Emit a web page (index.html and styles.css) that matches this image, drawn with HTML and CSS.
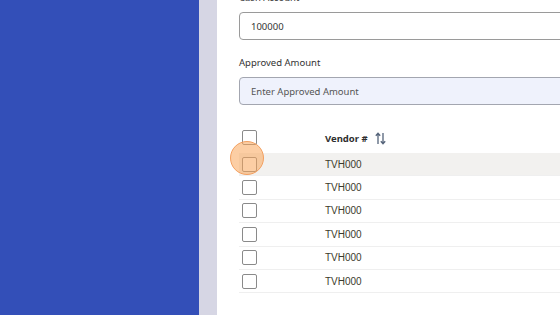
FILE: index.html
```html
<!DOCTYPE html>
<html lang="en">
<head>
    <meta charset="UTF-8">
    <title>Vendor Payments</title>
    <link rel="stylesheet" href="styles.css">
</head>
<body>
    <div class="layout">
        <aside class="sidebar"></aside>
        <div class="gutter"></div>
        <main class="main">
            <label class="field-label first">Cash Account</label>
            <input type="text" class="field-input" value="100000">

            <label class="field-label">Approved Amount</label>
            <input type="text" class="field-input filled" placeholder="Enter Approved Amount">

            <div class="vendor-table">
                <div class="table-head">
                    <div class="col-check"><span class="checkbox"></span></div>
                    <div class="col-vendor">Vendor #
                        <svg class="sort-icon" width="11" height="13" viewBox="0 0 11 13">
                            <path d="M3 12V1.5M0.8 3.8L3 1.3L5.2 3.8" fill="none" stroke="#55647a" stroke-width="1.3"/>
                            <path d="M8 1V11.5M5.8 9.2L8 11.7L10.2 9.2" fill="none" stroke="#55647a" stroke-width="1.3"/>
                        </svg>
                    </div>
                </div>
                <div id="vendorRows"></div>
            </div>
        </main>
    </div>

    <script>
        const rows = document.getElementById('vendorRows');
        for (let i = 0; i < 6; i++) {
            const row = document.createElement('div');
            row.className = i === 0 ? 'table-row active' : 'table-row';
            row.innerHTML = '<div class="col-check"><span class="checkbox"></span>' +
                (i === 0 ? '<span class="click-dot"></span>' : '') +
                '</div><div class="col-vendor">TVH000</div>';
            rows.appendChild(row);
        }
    </script>
</body>
</html>
```

FILE: styles.css
```css
body {
    margin: 0;
    font-family: "Noto Sans", Arial, sans-serif;
    overflow: hidden;
}
.layout {
    display: flex;
    height: 315px;
    overflow: hidden;
}
.sidebar {
    flex: 0 0 199px;
    background-color: #334fb8;
}
.gutter {
    flex: 0 0 18px;
    background-color: #d6d6e4;
}
.main {
    flex: 1;
    min-width: 0;
    padding-left: 22px;
    background-color: #fff;
}
.field-label {
    display: block;
    font-size: 9.5px;
    line-height: 14px;
    color: #333;
    margin: 16px 0 7px;
}
.field-label.first {
    margin-top: -9px;
}
.field-input {
    display: block;
    box-sizing: border-box;
    width: 380px;
    height: 28px;
    padding: 0 11px;
    border: 1px solid #9a9a9a;
    border-radius: 4px;
    font-family: "Noto Sans", Arial, sans-serif;
    font-size: 9.5px;
    color: #333;
}
.field-input.filled {
    background-color: #eff2fc;
    border-color: #a3a6b0;
}
.field-input::placeholder {
    color: #555;
}
.vendor-table {
    width: 380px;
    margin-top: 19px;
    font-family: "Liberation Sans", Arial, sans-serif;
    font-size: 10px;
}
.table-head,
.table-row {
    display: flex;
    align-items: center;
}
.table-head {
    height: 29px;
    font-family: "Noto Sans", Arial, sans-serif;
    font-size: 9.5px;
    font-weight: bold;
    color: #2f2f2f;
}
.table-head .col-check {
    margin-top: -2px;
}
.table-head .col-vendor {
    display: flex;
    align-items: center;
    gap: 7px;
}
.table-row {
    box-sizing: border-box;
    height: 23.4px;
    color: #3b3b2c;
    border-bottom: 1px solid #efefef;
}
.table-row.active {
    background-color: #f2f1ef;
}
.col-check {
    flex: 0 0 83px;
    padding-left: 3px;
    position: relative;
}
.checkbox {
    display: block;
    box-sizing: border-box;
    width: 15px;
    height: 15px;
    border: 1px solid #8a8a8a;
    border-radius: 2px;
    background-color: #fff;
}
.click-dot {
    position: absolute;
    left: -9px;
    top: -16px;
    width: 34px;
    height: 34px;
    border-radius: 50%;
    box-sizing: border-box;
    border: 1px solid #f3a060;
    background-color: rgba(250, 165, 90, 0.55);
}
```
